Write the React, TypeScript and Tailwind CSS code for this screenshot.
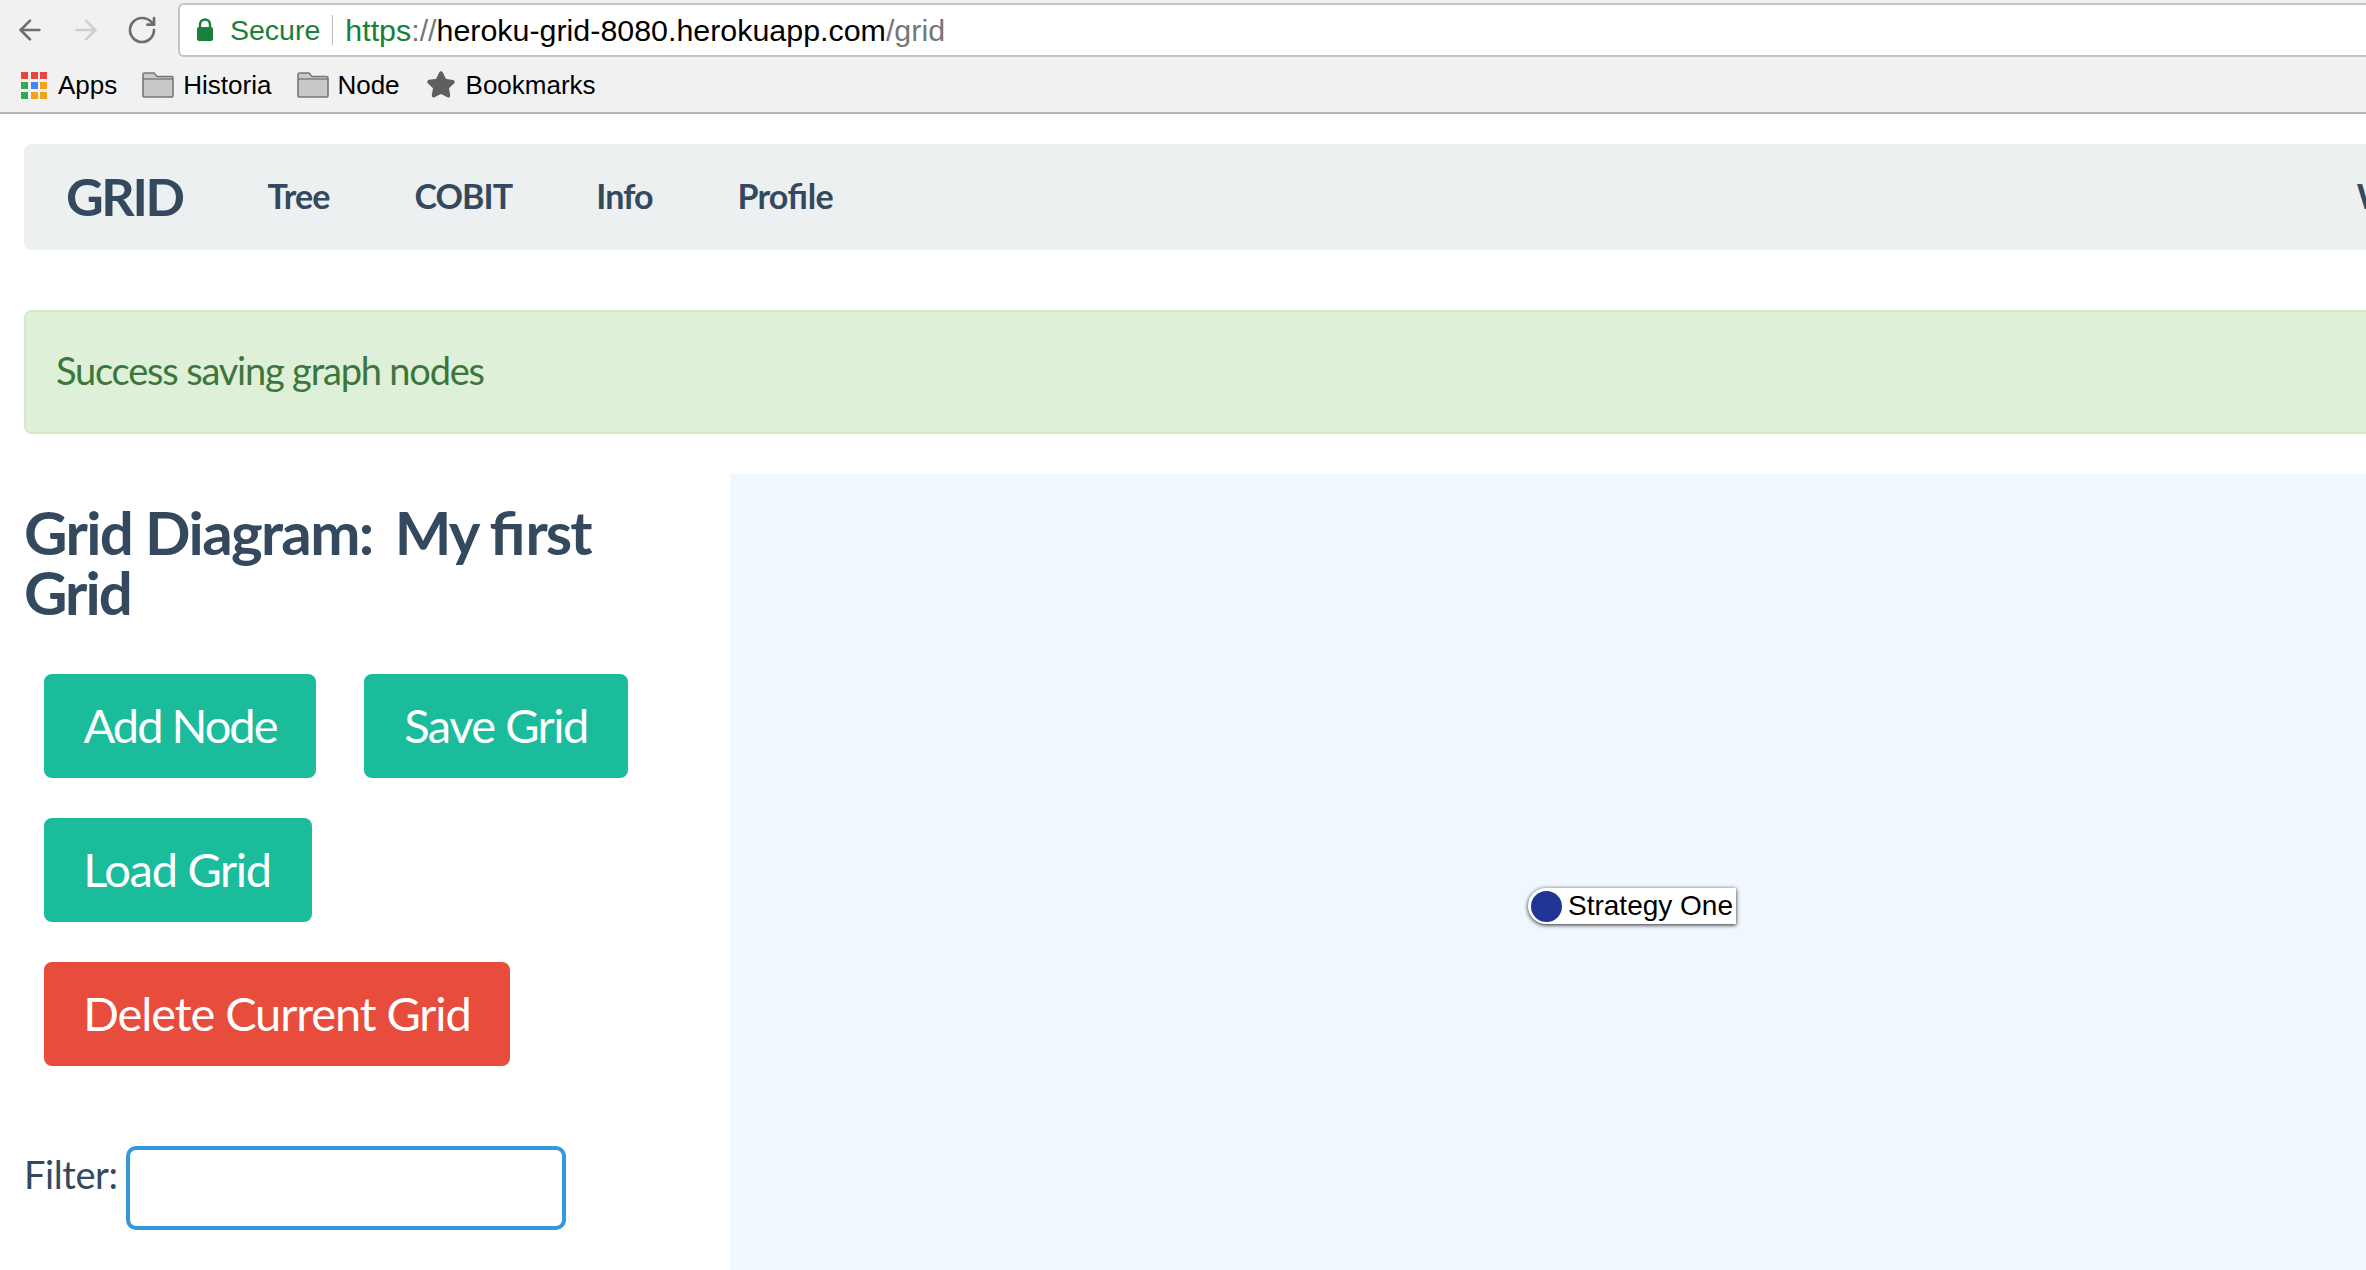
import { ArrowLeft, ArrowRight, RotateCw, Star } from "lucide-react"

const appColors = [
    "bg-[#e8453c]", "bg-[#e8453c]", "bg-[#e8453c]",
    "bg-[#34a853]", "bg-[#4285f4]", "bg-[#f4a21c]",
    "bg-[#34a853]", "bg-[#f4a21c]", "bg-[#f4a21c]",
]

function FolderIcon() {
    return (
        <svg width="32" height="26" viewBox="0 0 32 26" className="shrink-0">
            <path d="M1 24V2.5C1 1.7 1.7 1 2.5 1h9.5l3 3.5h14.5c.8 0 1.5.7 1.5 1.5v18c0 .6-.4 1-1 1H2c-.6 0-1-.4-1-1z" fill="#c9c9c9" stroke="#777" strokeWidth="1.6" />
            <path d="M1 7h30" stroke="#777" strokeWidth="1.4" />
        </svg>
    )
}

function Bookmark({ icon, label, className }: { icon: React.ReactNode; label: string; className: string }) {
    return (
        <div className={`flex items-center ${className}`}>
            {icon}
            <span className="text-[26px] text-black">{label}</span>
        </div>
    )
}

function ChromeBar() {
    return (
        <div className="h-[114px] bg-[#f1f1f1] border-b-2 border-[#b5b5b5] font-['Liberation_Sans',sans-serif]">
            <div className="flex items-center pt-[3px] h-[57px]">
                <ArrowLeft className="ml-[14px] w-[32px] h-[32px] text-[#6e6e6e]" strokeWidth={2} />
                <ArrowRight className="ml-[24px] w-[32px] h-[32px] text-[#cfcfcf]" strokeWidth={2} />
                <RotateCw className="ml-[24px] w-[32px] h-[32px] text-[#6e6e6e]" strokeWidth={2} />
                <div className="ml-[20px] flex-1 h-[54px] bg-white border-2 border-r-0 border-[#c4c4c4] rounded-l-[6px] flex items-center">
                    <svg width="18" height="24" viewBox="0 0 18 24" className="ml-[16px]">
                        <path d="M4 10V6.5a5 5 0 0 1 10 0V10" fill="none" stroke="#188038" strokeWidth="2.4" />
                        <rect x="1" y="9" width="16" height="14" rx="2" fill="#188038" />
                    </svg>
                    <span className="ml-[16px] text-[28.5px] text-[#188038]">Secure</span>
                    <div className="ml-[12px] w-px h-[30px] bg-[#bdbdbd]" />
                    <div className="ml-[12px] pt-[1px] text-[30.4px] whitespace-nowrap">
                        <span className="text-[#188038]">https</span>
                        <span className="text-[#777]">://</span>
                        <span className="text-black">heroku-grid-8080.herokuapp.com</span>
                        <span className="text-[#777]">/grid</span>
                    </div>
                </div>
            </div>
            <div className="flex items-center h-[55px] pt-[1px]">
                <div className="ml-[21px] grid grid-cols-3 gap-[3px] w-[26px]">
                    {appColors.map((c, i) => (
                        <div key={i} className={`w-[7px] h-[7px] ${c}`} />
                    ))}
                </div>
                <span className="ml-[11px] text-[26px] text-black">Apps</span>
                <Bookmark className="ml-[25px] gap-[9px]" icon={<FolderIcon />} label="Historia" />
                <Bookmark className="ml-[26px] gap-[8px]" icon={<FolderIcon />} label="Node" />
                <Bookmark className="ml-[26px] gap-[10px]" icon={<Star className="w-[30px] h-[30px] text-[#5f5f5f] fill-[#5f5f5f]" />} label="Bookmarks" />
            </div>
        </div>
    )
}

export default function App() {
    return (
        <div className="w-[2366px] h-[1270px] overflow-hidden bg-white font-['Lato',sans-serif] text-[#34495e]">
            <ChromeBar />
            <div className="w-[2500px] pl-[24px] pt-[30px]">
                <nav className="h-[106px] bg-[#ecf0f1] rounded-l-[8px] flex items-center pb-[3px]">
                    <span className="ml-[42px] text-[52px] font-bold tracking-[-2.4px]">GRID</span>
                    <a className="ml-[85px] text-[34px] font-bold tracking-[-0.9px]">Tree</a>
                    <a className="ml-[85px] text-[34px] font-bold tracking-[-0.9px]">COBIT</a>
                    <a className="ml-[84px] text-[34px] font-bold tracking-[-0.9px]">Info</a>
                    <a className="ml-[85px] text-[34px] font-bold tracking-[-0.9px]">
                        Pro<span className="tracking-normal">fi</span>le
                    </a>
                    <a className="ml-[1524px] text-[34px] font-bold">Welcome</a>
                </nav>
                <div className="mt-[60px] h-[124px] bg-[#dff0d8] border-2 border-[#d6e9c6] rounded-l-[8px] flex items-center pl-[30px] pb-[4px] text-[38px] tracking-[-1.2px] text-[#3c763d]">
                    Success saving graph nodes
                </div>
            </div>
            <div className="mt-[40px] flex pl-[24px] h-[796px]">
                <div className="w-[706px] shrink-0">
                    <h2 className="mt-[28px] w-[620px] text-[60px] leading-[60px] font-bold tracking-[-2px] whitespace-pre-wrap">
                        <span className="tracking-[-1.65px]">Grid Diagram:</span>
                        <span className="tracking-[-3.5px]">{"  "}</span>My <span className="tracking-normal">fi</span>rst Grid
                    </h2>
                    <div className="mt-[52px] ml-[20px] flex flex-wrap gap-x-[48px] gap-y-[40px] w-[600px] text-[47px] text-white">
                        <button className="h-[104px] pb-[2px] w-[272px] rounded-[8px] bg-[#1abc9c] tracking-[-2px]">Add Node</button>
                        <button className="h-[104px] pb-[2px] w-[264px] rounded-[8px] bg-[#1abc9c] tracking-[-1.5px]">Save Grid</button>
                        <button className="h-[104px] pb-[2px] pr-[2px] w-[268px] rounded-[8px] bg-[#1abc9c] tracking-[-1.3px]">Load Grid</button>
                        <button className="h-[104px] pb-[2px] w-[466px] rounded-[8px] bg-[#e74c3c] tracking-[-1.1px]">Delete Current Grid</button>
                    </div>
                    <div className="mt-[80px] flex items-start">
                        <label className="text-[38px] tracking-[-0.4px]">Filter:</label>
                        <input className="ml-[8px] w-[440px] h-[84px] bg-white border-[4px] border-[#3498db] rounded-[10px] outline-none" />
                    </div>
                </div>
                <div className="relative flex-1 bg-[#f0f7fe]">
                    <div className="absolute left-[798px] top-[414px] w-[208px] h-[36px] flex items-center bg-white rounded-l-[18px] shadow-[0_1px_4px_rgba(0,0,0,0.85)] font-['Liberation_Sans',sans-serif] text-black">
                        <div className="ml-[3px] w-[31px] h-[31px] rounded-full bg-[#1e3595]" />
                        <span className="ml-[6px] text-[28px] whitespace-nowrap">Strategy One</span>
                    </div>
                </div>
            </div>
        </div>
    )
}
